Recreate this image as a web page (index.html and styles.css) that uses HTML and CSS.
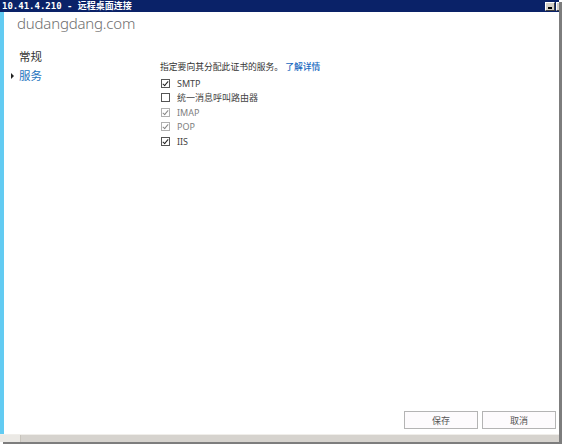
FILE: index.html
```html
<!DOCTYPE html>
<html lang="zh-CN">
<head>
<meta charset="utf-8">
<title>远程桌面连接</title>
<link rel="stylesheet" href="styles.css">
</head>
<body>
<div class="screen">
  <div class="window">
    <div class="titlebar">
      <span class="title">10.41.4.210 - 远程桌面连接</span>
      <span class="tbtn min"><span class="bar"></span></span>
      <span class="tbtn restore"></span>
    </div>
    <div class="client">
      <div class="accent"></div>
      <div class="main">
        <div class="site">dudangdang.com</div>
        <div class="cols">
          <nav class="nav">
            <div class="nav-item">常规</div>
            <div class="nav-item active"><span class="arrow"></span>服务</div>
          </nav>
          <section class="content">
            <p class="intro">指定要向其分配此证书的服务。<a class="link">了解详情</a></p>
            <ul class="checks">
              <li><span class="cb checked"></span>SMTP</li>
              <li><span class="cb"></span>统一消息呼叫路由器</li>
              <li class="disabled"><span class="cb checked"></span>IMAP</li>
              <li class="disabled"><span class="cb checked"></span>POP</li>
              <li><span class="cb checked"></span>IIS</li>
            </ul>
          </section>
        </div>
        <div class="footer">
          <button class="btn">保存</button>
          <button class="btn">取消</button>
        </div>
      </div>
    </div>
    <div class="hscroll">
      <div class="hs-left"></div>
      <div class="hs-track"></div>
    </div>
  </div>
</div>
</body>
</html>
```
FILE: styles.css
```css
html, body {
  margin: 0;
  padding: 0;
  background: #ffffff;
}
.screen {
  width: 565px;
  height: 446px;
  position: relative;
  overflow: hidden;
}
.window {
  width: 559px;
  height: 442px;
  display: flex;
  flex-direction: column;
  box-shadow: 3px 2px 0 #7d7d7d;
  background: #fff;
}
.titlebar {
  height: 12px;
  background: #0a2268;
  display: flex;
  align-items: center;
  flex: none;
}
.title {
  color: #fff;
  font-family: "DejaVu Sans Mono", "Noto Sans CJK SC", monospace;
  font-weight: bold;
  font-size: 9px;
  line-height: 12px;
  padding-left: 2px;
  flex: 1;
  white-space: nowrap;
}
.tbtn {
  width: 9px;
  height: 9px;
  background: #d4d0c8;
  border: 1px solid;
  border-color: #fff #404040 #404040 #fff;
  box-sizing: border-box;
  display: flex;
  align-items: flex-end;
  justify-content: center;
}
.min {
  width: 10px;
  margin-right: 1px;
}
.min .bar {
  width: 4px;
  height: 2px;
  background: #000;
  margin-bottom: 1px;
}
.restore {
  width: 3px;
  border-right: none;
}
.client {
  flex: 1;
  display: flex;
  min-height: 0;
}
.accent {
  width: 4px;
  background: #62cbf2;
  flex: none;
}
.main {
  flex: 1;
  display: flex;
  flex-direction: column;
  font-family: "Noto Sans", "Noto Sans CJK SC", sans-serif;
}
.site {
  font-family: "Noto Sans", sans-serif;
  font-weight: 300;
  font-size: 15px;
  color: #6f6f6f;
  line-height: 20px;
  padding: 1px 0 0 13px;
  letter-spacing: -0.2px;
}
.cols {
  flex: 1;
  display: flex;
}
.nav {
  width: 156px;
  padding-top: 14px;
}
.nav-item {
  font-family: "Noto Sans CJK SC", sans-serif;
  font-size: 11.5px;
  line-height: 19px;
  color: #333;
  padding-left: 15px;
  position: relative;
}
.nav-item.active {
  color: #1e73be;
}
.arrow {
  position: absolute;
  left: 7px;
  top: 7px;
  width: 0;
  height: 0;
  border-left: 3px solid #222;
  border-top: 3px solid transparent;
  border-bottom: 3px solid transparent;
}
.content {
  padding-top: 28px;
}
.intro {
  margin: 0 0 3px 0;
  font-family: "Noto Sans CJK SC", sans-serif;
  font-size: 8.8px;
  line-height: 12px;
  color: #333;
}
.link {
  color: #1668c0;
  margin-left: 2px;
  font-weight: 500;
}
.checks {
  list-style: none;
  margin: 0;
  padding: 0 0 0 1px;
}
.checks li {
  display: flex;
  align-items: center;
  height: 14.5px;
  font-family: "Noto Sans", "Noto Sans CJK SC", sans-serif;
  font-size: 9px;
  color: #444;
}
.checks li.disabled {
  color: #808080;
}
.cb {
  width: 9px;
  height: 9px;
  box-sizing: border-box;
  border: 1px solid #555;
  background: #fff;
  margin-right: 7px;
  position: relative;
  flex: none;
}
.disabled .cb {
  border-color: #b0b0b0;
}
.cb.checked::after {
  content: "";
  position: absolute;
  left: 2px;
  top: 0px;
  width: 2px;
  height: 5px;
  border: solid #222;
  border-width: 0 1.7px 1.7px 0;
  transform: rotate(40deg);
}
.disabled .cb.checked::after {
  border-color: #888;
}
.footer {
  display: flex;
  justify-content: flex-end;
  gap: 4px;
  padding: 0 3px 5px 0;
}
.btn {
  width: 74px;
  height: 18px;
  background: #fdfbfd;
  border: 1px solid #b4b4b4;
  font-family: "Noto Sans CJK SC", sans-serif;
  font-size: 9px;
  color: #555;
  padding: 0;
}
.hscroll {
  height: 8px;
  display: flex;
  flex: none;
  background: #d4d0c8;
  border-top: 1px solid #f0eeea;
  box-sizing: border-box;
}
.hs-left {
  width: 20px;
  background: #ebe9e5;
  border-right: 1px solid #c8c4bc;
}
.hs-track {
  flex: 1;
  background: #d6d3ce;
}
```
